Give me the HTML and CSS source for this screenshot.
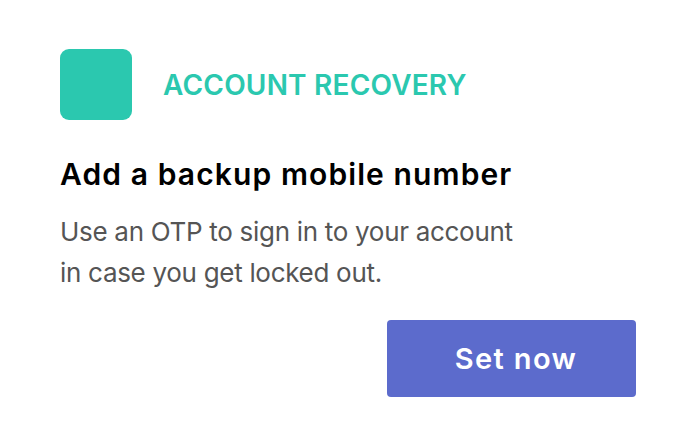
FILE: index.html
```html
<!DOCTYPE html>
<html lang="en-US">
<head>
    <meta charset="UTF-8">
    <meta name="viewport" content="width=device-width, initial-scale=1.0">
    <title>Account Recovery</title>
    <link rel="stylesheet" href="styles.css">
</head>
<body>
    <div class="card">
        <header class="card-head">
            <div class="badge"></div>
            <h2 class="eyebrow">ACCOUNT RECOVERY</h2>
        </header>
        <h1 class="title">Add a backup mobile number</h1>
        <p class="desc">Use an OTP to sign in to your account<br>in case you get locked out.</p>
        <div class="actions">
            <button class="btn">Set now</button>
        </div>
    </div>
</body>
</html>
```

FILE: styles.css
```css
:root {
    --teal: #2BC8AF;
    --indigo: #5C6BCC;
    --text: #000000;
    --muted: #555555;
}

* {
    margin: 0;
    padding: 0;
    box-sizing: border-box;
}

body {
    font-family: Inter, 'Noto Sans', sans-serif;
    background: #FFFFFF;
    color: var(--text);
    width: 693px;
    height: 444px;
}

.card {
    padding: 49px 57px 0 60px;
}

.card-head {
    display: flex;
    align-items: center;
    gap: 31px;
}

.badge {
    width: 72px;
    height: 71px;
    border-radius: 9px;
    background: var(--teal);
}

.eyebrow {
    color: var(--teal);
    font-size: 28px;
    font-weight: 600;
    letter-spacing: 0.2px;
    margin-top: 1px;
}

.title {
    font-size: 30px;
    font-weight: 600;
    letter-spacing: 1.1px;
    line-height: 36px;
    margin-top: 36px;
}

.desc {
    color: var(--muted);
    font-size: 26px;
    letter-spacing: -0.3px;
    line-height: 41px;
    margin-top: 19px;
}

.actions {
    display: flex;
    justify-content: flex-end;
    margin-top: 27px;
}

.btn {
    width: 249px;
    height: 77px;
    border: none;
    border-radius: 4px;
    padding-left: 9px;
    background: var(--indigo);
    color: #FFFFFF;
    font-family: inherit;
    font-size: 29px;
    font-weight: 600;
    letter-spacing: 1.4px;
}
```
